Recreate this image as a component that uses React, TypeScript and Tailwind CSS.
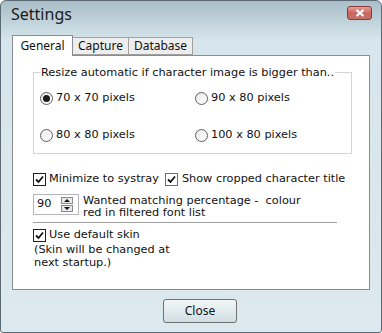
import React from 'react';

const ui = { fontFamily: '"DejaVu Sans", Verdana, sans-serif' };
const seg = { fontFamily: '"Noto Sans", "Open Sans", sans-serif' };

function Radio({ checked, label }: { checked?: boolean; label: string }) {
	return (
		<div className="flex items-center gap-[3px]">
			<span className="w-[13px] h-[13px] rounded-full border border-[#5e5e5e] bg-gradient-to-br from-[#e8e8e8] to-white flex items-center justify-center shrink-0">
				{checked && <span className="w-[7px] h-[7px] rounded-full bg-[#1c1c1c]" />}
			</span>
			<span>{label}</span>
		</div>
	);
}

function Check({ blue }: { blue?: boolean }) {
	return (
		<span
			className={
				blue
					? 'w-[13px] h-[13px] border border-[#3d7bb5] bg-white flex items-center justify-center shrink-0'
					: 'w-[13px] h-[13px] border border-[#1e1e1e] bg-white flex items-center justify-center shrink-0'
			}
		>
			<svg width="9" height="9" viewBox="0 0 9 9">
				<path d="M1 4.5 L3.5 7 L8 1.5" fill="none" stroke="#111" strokeWidth="1.8" />
			</svg>
		</span>
	);
}

export default function App() {
	return (
		<div
			className="w-[382px] h-[333px] border border-[#5c6b73] rounded-t-[6px] rounded-b-[3px] bg-gradient-to-b from-[#a9bec8] via-[#d7e6ec] via-[12%] to-[#dce9ee] flex flex-col text-[11.3px] text-[#111]"
			style={ui}
		>
			{/* Title bar */}
			<div className="h-[33px] flex items-start justify-between pl-[10px] pr-[9px]">
				<span className="text-[16px] leading-[20px] mt-[3px] text-[#1b1b1b]" style={seg}>
					Settings
				</span>
				<span className="mt-[5px] w-[25px] h-[14px] rounded-[3px] border border-[#8b3b36] bg-gradient-to-b from-[#e2a29c] via-[#c9645d] to-[#c4716a] flex items-center justify-center">
					<svg width="10" height="8" viewBox="0 0 10 8">
						<path d="M1.5 1 L8.5 7 M8.5 1 L1.5 7" stroke="white" strokeWidth="2.2" />
					</svg>
				</span>
			</div>

			{/* Tabs */}
			<div className="flex items-end pl-[11px] h-[21px] text-[12px]" style={seg}>
				<div className="w-[61px] h-[21px] bg-white border border-b-0 border-[#898c95] flex items-center justify-center -mb-px relative z-10">
					General
				</div>
				<div className="w-[56px] h-[18px] bg-[#eeeeee] border border-l-0 border-[#a0a0a0] flex items-center justify-center">
					Capture
				</div>
				<div className="w-[64px] h-[18px] bg-[#eeeeee] border border-l-0 border-[#a0a0a0] flex items-center justify-center">
					Database
				</div>
			</div>

			{/* Panel */}
			<div className="mx-[11px] h-[235px] bg-white border border-[#898c95] pl-[20px] pt-[10px]">
				<fieldset className="w-[319px] h-[88px] border border-[#d5d5d5] pl-[6px] pr-0 m-0">
					<legend className="px-[1px] leading-[13px]">
						Resize automatic if character image is bigger than..
					</legend>
					<div className="grid grid-cols-[155px_1fr] gap-y-[20px] pt-[11px]">
						<Radio checked label="70 x 70 pixels" />
						<Radio label="90 x 80 pixels" />
						<Radio label="80 x 80 pixels" />
						<Radio label="100 x 80 pixels" />
					</div>
				</fieldset>

				<div className="flex items-center mt-[19px] h-[13px]">
					<Check />
					<span className="ml-[3px]">Minimize to systray</span>
					<span className="ml-[6px] flex items-center">
						<Check blue />
						<span className="ml-[4px]">Show cropped character title</span>
					</span>
				</div>

				<div className="flex items-start mt-[8px]">
					<div className="w-[46px] h-[21px] border border-[#b4b6bb] flex items-center pl-[3px] shrink-0">
						<span className="w-[24px]">90</span>
						<span className="flex flex-col gap-px">
							<span className="w-[12px] h-[7px] border border-[#8a8a8a] bg-[#e9e9e9] flex items-center justify-center">
								<svg width="6" height="3" viewBox="0 0 6 3">
									<path d="M0 3 L3 0 L6 3 Z" fill="#111" />
								</svg>
							</span>
							<span className="w-[12px] h-[7px] border border-[#8a8a8a] bg-[#e9e9e9] flex items-center justify-center">
								<svg width="6" height="3" viewBox="0 0 6 3">
									<path d="M0 0 L6 0 L3 3 Z" fill="#111" />
								</svg>
							</span>
						</span>
					</div>
					<div className="ml-[4px] leading-[12px] mt-[1px]">
						Wanted matching percentage -&nbsp; colour
						<br />
						red in filtered font list
					</div>
				</div>

				<div className="w-[304px] h-px bg-[#a0a0a0] mt-[3px]" />

				<div className="flex items-center mt-[6px] h-[13px]">
					<Check />
					<span className="ml-[3px]">Use default skin</span>
				</div>
				<div className="leading-[13px] mt-[1px] pl-[1px]">
					(Skin will be changed at
					<br />
					next startup.)
				</div>
			</div>

			{/* Footer */}
			<div className="flex justify-center pt-[9px] pl-[18px]">
				<button className="w-[74px] h-[24px] rounded-[3px] border border-[#707070] bg-gradient-to-b from-[#f3f6f7] via-[#e3ecef] via-[50%] to-[#cfdde3] text-[12px] text-[#111]" style={seg}>
					Close
				</button>
			</div>
		</div>
	);
}
